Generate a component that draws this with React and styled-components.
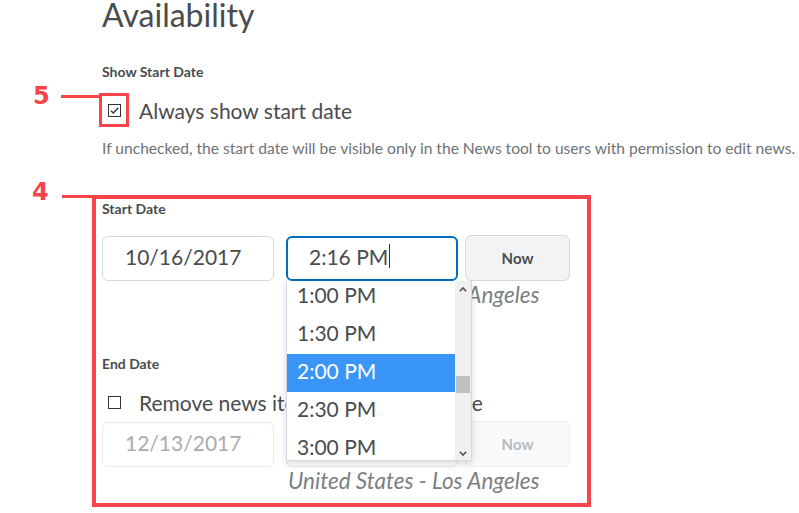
import styled, { createGlobalStyle, css } from 'styled-components';

const GlobalStyle = createGlobalStyle`
  html, body {
    margin: 0;
    padding: 0;
    background: #ffffff;
  }
  body {
    font-family: Lato, "Open Sans", "Liberation Sans", sans-serif;
    color: #494c4e;
  }
`

const RED = '#f6444a';

const Page = styled.div`
  position: relative;
  width: 799px;
  height: 513px;
  overflow: hidden;
  box-sizing: border-box;
  padding-left: 102px;
`
const Title = styled.h1`
  margin: -4px 0 0;
  font-size: 32px;
  line-height: 38px;
  font-weight: 400;
  color: #494c4e;
`
const FieldLabel = styled.div`
  font-size: 14px;
  line-height: 20px;
  font-weight: 700;
  color: #494c4e;
  margin-top: ${props => props.$top}px;
`
const CheckRow = styled.label`
  position: relative;
  display: flex;
  align-items: center;
  gap: 18px;
  height: 26px;
  padding-left: 6px;
  margin-top: ${props => props.$top}px;
  font-size: 21px;
  line-height: 26px;
  white-space: nowrap;
`
const Box = styled.span`
  width: 13px;
  height: 13px;
  box-sizing: border-box;
  border: 1px solid #333;
  display: flex;
  align-items: center;
  justify-content: center;
  flex: none;
  margin-top: -1px;
`
const HelpText = styled.p`
  margin: 13px 0 0;
  font-size: 15.6px;
  line-height: 22px;
  color: #6e7376;
  white-space: nowrap;
`
const Marker = styled.span`
  position: absolute;
  font-family: "DejaVu Sans", "Liberation Sans", sans-serif;
  font-weight: 700;
  font-size: 24px;
  line-height: 24px;
  color: ${RED};
  left: ${props => props.$x}px;
  top: ${props => props.$y}px;
`
const Leader = styled.span`
  position: absolute;
  height: 3px;
  background: ${RED};
  left: ${props => props.$x}px;
  top: ${props => props.$y}px;
  width: ${props => props.$w}px;
`
const Frame = styled.span`
  position: absolute;
  left: -3px;
  top: -5px;
  width: 30px;
  height: 34px;
  box-sizing: border-box;
  border: 3px solid ${RED};
`
const Section = styled.section`
  position: relative;
  margin: 36px 0 0 -10px;
  width: 499px;
  box-sizing: border-box;
  border: 4px solid ${RED};
  padding: 0 0 9px 6px;
`
const DateRow = styled.div`
  display: grid;
  grid-template-columns: 172px 172px 105px;
  column-gap: 12px;
  margin-top: ${props => props.$top}px;
  & > :last-child {
    margin-left: -5px;
  }
`
const Field = styled.div`
  height: 45px;
  box-sizing: border-box;
  border: 1px solid #d3d9e3;
  border-radius: 6px;
  padding: 0 20px 5px 22px;
  display: flex;
  align-items: center;
  font-size: 21px;
  color: #494c4e;
  background: #fff;
  ${props => props.$focus && css`
    border: 2px solid #006fbf;
    padding-left: 21px;
  `}
  ${props => props.$disabled && css`
    border-color: #e6e9ee;
    color: #a8acaf;
  `}
`
const Caret = styled.span`
  width: 1px;
  height: 24px;
  background: #333;
  margin-left: 1px;
`
const NowButton = styled.button`
  width: 105px;
  height: 46px;
  margin-top: -1px;
  box-sizing: border-box;
  border: 1px solid #d3d9e3;
  border-radius: 6px;
  background: #f1f3f5;
  font-family: Lato, "Open Sans", sans-serif;
  font-size: 15px;
  font-weight: 700;
  color: #494c4e;
  ${props => props.$disabled && css`
    background: #f9fafb;
    border-color: #eceef1;
    color: #b6babd;
  `}
`
const TimeCell = styled.div`
  position: relative;
`
const Zone = styled.div`
  margin: 1px 0 0 2px;
  font-size: 22.5px;
  line-height: 26px;
  font-style: italic;
  color: #7b7f82;
  white-space: nowrap;
`
const Dropdown = styled.div`
  position: absolute;
  z-index: 2;
  left: 0;
  top: 45px;
  width: 186px;
  height: 180px;
  box-sizing: border-box;
  border: 1px solid #d3d9e3;
  border-top: none;
  background: #fff;
  box-shadow: 0 3px 8px rgba(0, 0, 0, 0.14);
  display: flex;
  overflow: hidden;
`
const OptionList = styled.ul`
  list-style: none;
  margin: -3px 0 0;
  padding: 0;
  flex: 1;
`
const Option = styled.li`
  height: 38px;
  box-sizing: border-box;
  padding: 0 0 4px 10px;
  font-size: 21px;
  line-height: 34px;
  color: #494c4e;
  ${props => props.$active && css`
    background: #3a96f6;
    color: #ffffff;
  `}
`
const ScrollTrack = styled.div`
  position: relative;
  width: 16px;
  flex: none;
  background: #f0f0f0;
`
const ScrollArrow = styled.svg`
  position: absolute;
  left: 4px;
  ${props => props.$down ? 'bottom: 4px;' : 'top: 6px;'}
`
const ScrollThumb = styled.div`
  position: absolute;
  left: 1px;
  right: 1px;
  top: 95px;
  height: 17px;
  background: #c1c1c1;
`

const Check = ({ checked }) => (
  <Box>
    {checked && (
      <svg width="9" height="7" viewBox="0 0 9 7">
        <polyline points="0.8,3.6 3.3,6 8.3,0.8" fill="none" stroke="#333" strokeWidth="1.3" />
      </svg>
    )}
  </Box>
)

const times = ['1:00 PM', '1:30 PM', '2:00 PM', '2:30 PM', '3:00 PM'];

const App = () => {
  return <>
    <GlobalStyle />
    <Page>
      <Title>Availability</Title>
      <FieldLabel $top={28}>Show Start Date</FieldLabel>
      <CheckRow $top={16}>
        <Marker $x={-69} $y={-14}>5</Marker>
        <Leader $x={-41} $y={-3} $w={38} />
        <Frame />
        <Check checked />
        Always show start date
      </CheckRow>
      <HelpText>If unchecked, the start date will be visible only in the News tool to users with permission to edit news.</HelpText>
      <Section>
        <Marker $x={-64} $y={-19}>4</Marker>
        <Leader $x={-34} $y={-4} $w={30} />
        <FieldLabel $top={0}>Start Date</FieldLabel>
        <DateRow $top={17}>
          <Field>10/16/2017</Field>
          <TimeCell>
            <Field $focus>2:16 PM<Caret /></Field>
            <Zone>United States - Los Angeles</Zone>
            <Dropdown>
              <OptionList>
                {times.map(t => <Option key={t} $active={t === '2:00 PM'}>{t}</Option>)}
              </OptionList>
              <ScrollTrack>
                <ScrollArrow width="8" height="5" viewBox="0 0 8 5">
                  <polyline points="0.8,4.2 4,1 7.2,4.2" fill="none" stroke="#505050" strokeWidth="1.6" />
                </ScrollArrow>
                <ScrollThumb />
                <ScrollArrow $down width="8" height="5" viewBox="0 0 8 5">
                  <polyline points="0.8,0.8 4,4 7.2,0.8" fill="none" stroke="#505050" strokeWidth="1.6" />
                </ScrollArrow>
              </ScrollTrack>
            </Dropdown>
          </TimeCell>
          <NowButton>Now</NowButton>
        </DateRow>
        <FieldLabel $top={46}>End Date</FieldLabel>
        <CheckRow $top={16}>
          <Check />
          Remove news item after the end date
        </CheckRow>
        <DateRow $top={6}>
          <Field $disabled>12/13/2017</Field>
          <TimeCell>
            <Field $disabled>3:00 PM</Field>
            <Zone>United States - Los Angeles</Zone>
          </TimeCell>
          <NowButton $disabled>Now</NowButton>
        </DateRow>
      </Section>
    </Page>
  </>
}
export default App;
